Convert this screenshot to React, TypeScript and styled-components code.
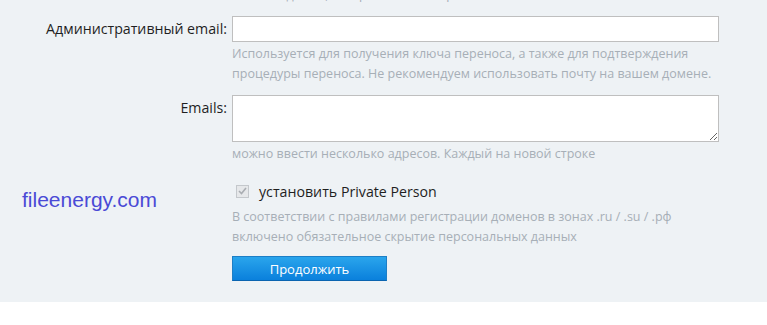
import React from 'react';
import styled, { createGlobalStyle } from 'styled-components';

const GlobalStyle = createGlobalStyle`
  html, body {
    margin: 0;
    padding: 0;
    background: #ffffff;
    font-family: "Open Sans", "Noto Sans", Arial, sans-serif;
  }
`;

const Page = styled.div`
  position: relative;
  background: #eef2f5;
  height: 302px;
  overflow: hidden;
`;

const Form = styled.div`
  display: grid;
  grid-template-columns: 227px 487px;
  column-gap: 5px;
  margin-top: -17px;
`;

const Label = styled.div`
  text-align: right;
  font-size: 14.2px;
  color: #1f1f1f;
  line-height: 26px;
  white-space: nowrap;
`;

const Field = styled.div`
  display: flex;
  flex-direction: column;
`;

const TextInput = styled.input`
  box-sizing: border-box;
  width: 487px;
  height: 26px;
  border: 1px solid #bfbfbf;
  background: #fff;
  margin: 0;
`;

const TextArea = styled.textarea`
  box-sizing: border-box;
  width: 487px;
  height: 47px;
  border: 1px solid #bfbfbf;
  background: #fff;
  margin: 0;
  display: block;
`;

const Hint = styled.div<{ $mt?: number; $mb?: number }>`
  font-size: 12.5px;
  line-height: 20px;
  color: #a7afb7;
  margin-top: ${p => p.$mt ?? 2}px;
  margin-bottom: ${p => p.$mb ?? 11}px;
  white-space: nowrap;
`;

const CheckRow = styled.label`
  display: flex;
  align-items: center;
  gap: 10px;
  height: 24px;
  font-size: 14.2px;
  color: #1f1f1f;
  padding-left: 4px;
`;

const CheckBox = styled.span`
  box-sizing: border-box;
  width: 13px;
  height: 13px;
  border: 1px solid #c4c8cc;
  background: #e6e8ea;
  display: flex;
  align-items: center;
  justify-content: center;
`;

const Button = styled.button`
  box-sizing: border-box;
  width: 155px;
  height: 25px;
  margin-top: 1px;
  border: 1px solid #1d7fc6;
  border-bottom-color: #0a64b0;
  background: linear-gradient(#2aa5ec, #0a80dc);
  color: #ffffff;
  font-family: "Open Sans", "Noto Sans", Arial, sans-serif;
  font-size: 13px;
  padding: 0;
  cursor: pointer;
`;

const Watermark = styled.div`
  position: absolute;
  left: 22px;
  top: 188px;
  font-family: "Liberation Sans", Arial, sans-serif;
  font-size: 21px;
  color: #4a4ad6;
`;

export default function App() {
  return (
    <>
      <GlobalStyle />
      <Page>
        <Form>
          <div />
          <Hint $mt={2} $mb={11}>Укажите домен, который хотите перенести</Hint>

          <Label>Административный email:</Label>
          <Field>
            <TextInput type="text" />
            <Hint>
              Используется для получения ключа переноса, а также для подтверждения
              <br />
              процедуры переноса. Не рекомендуем использовать почту на вашем домене.
            </Hint>
          </Field>

          <Label>Emails:</Label>
          <Field>
            <TextArea />
            <Hint $mb={15}>можно ввести несколько адресов. Каждый на новой строке</Hint>
          </Field>

          <div />
          <Field>
            <CheckRow>
              <CheckBox>
                <svg width="9" height="8" viewBox="0 0 9 8">
                  <path d="M1 4 L3.5 6.5 L8 1" fill="none" stroke="#a9adb2" strokeWidth="1.6" />
                </svg>
              </CheckBox>
              установить Private Person
            </CheckRow>
            <Hint $mt={4} $mb={8}>
              В соответствии с правилами регистрации доменов в зонах .ru / .su / .рф
              <br />
              включено обязательное скрытие персональных данных
            </Hint>
            <Button>Продолжить</Button>
          </Field>
        </Form>
        <Watermark>fileenergy.com</Watermark>
      </Page>
    </>
  );
}
